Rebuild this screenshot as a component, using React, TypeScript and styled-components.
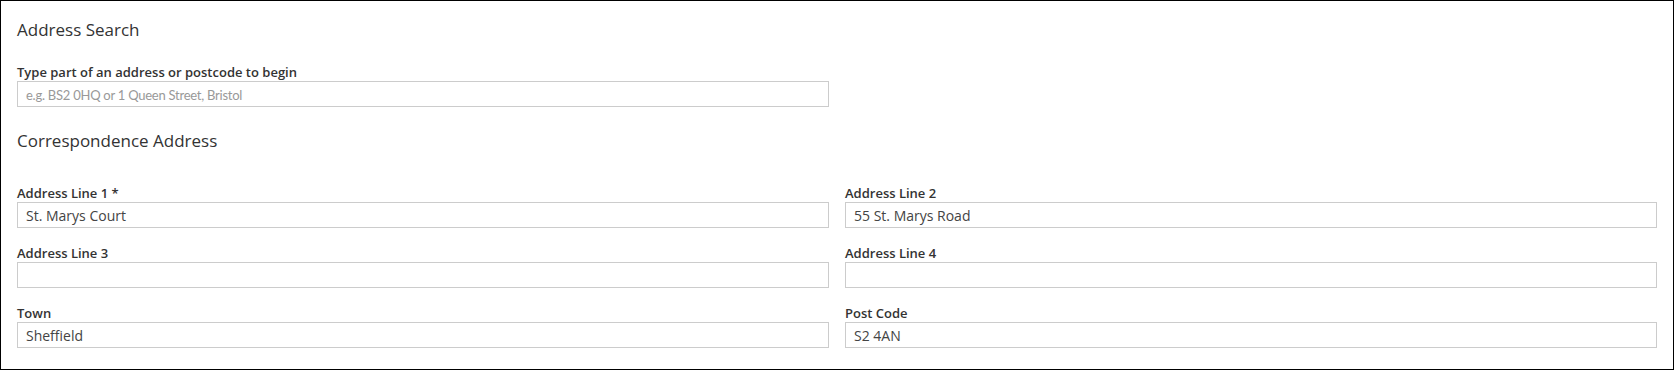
import styled, { createGlobalStyle } from "styled-components";

const GlobalStyle = createGlobalStyle`
  html, body {
    margin: 0;
    padding: 0;
    background: #fff;
  }
  * {
    box-sizing: border-box;
  }
`;

interface Field {
  id: string;
  label: string;
  value: string;
}

const fields: Field[] = [
  { id: "line1", label: "Address Line 1 *", value: "St. Marys Court" },
  { id: "line2", label: "Address Line 2", value: "55 St. Marys Road" },
  { id: "line3", label: "Address Line 3", value: "" },
  { id: "line4", label: "Address Line 4", value: "" },
  { id: "town", label: "Town", value: "Sheffield" },
  { id: "postcode", label: "Post Code", value: "S2 4AN" },
];

const App = () => {
  return (
    <>
      <GlobalStyle />
      <Panel>
        <Heading>Address Search</Heading>
        <SearchGroup>
          <Label htmlFor="search">Type part of an address or postcode to begin</Label>
          <Input id="search" placeholder="e.g. BS2 0HQ or 1 Queen Street, Bristol" readOnly />
        </SearchGroup>
        <Heading $spaced>Correspondence Address</Heading>
        <FieldGrid>
          {fields.map((field) => (
            <FieldGroup key={field.id}>
              <Label htmlFor={field.id}>{field.label}</Label>
              <Input id={field.id} defaultValue={field.value} />
            </FieldGroup>
          ))}
        </FieldGrid>
      </Panel>
    </>
  );
};

export default App;

const Panel = styled.div`
  width: 1674px;
  height: 370px;
  border: 1px solid #000;
  padding: 19px 16px 21px;
  font-family: "Open Sans", "Liberation Sans", sans-serif;
  color: #333;
  background: #fff;
`;

const Heading = styled.h2<{ $spaced?: boolean }>`
  margin: 0 0 ${(props) => (props.$spaced ? "33px" : "23px")};
  font-size: 17px;
  line-height: 20px;
  font-weight: 400;
  color: #333;
`;

const SearchGroup = styled.div`
  width: 812px;
  margin-bottom: 24px;
`;

const FieldGrid = styled.div`
  display: grid;
  grid-template-columns: 1fr 1fr;
  column-gap: 16px;
  row-gap: 16px;
`;

const FieldGroup = styled.div`
  display: flex;
  flex-direction: column;
`;

const Label = styled.label`
  display: block;
  margin-bottom: 0;
  font-size: 13px;
  line-height: 18px;
  font-weight: 600;
  color: #333;
`;

const Input = styled.input`
  display: block;
  width: 100%;
  height: 26px;
  margin: 0;
  padding: 0 8px;
  border: 1px solid #ccc;
  border-radius: 0;
  outline: none;
  background: #fff;
  font-family: "Open Sans", "Liberation Sans", sans-serif;
  font-size: 14px;
  color: #444;

  &::placeholder {
    font-family: Lato, "Open Sans", sans-serif;
    font-size: 13px;
    letter-spacing: -0.25px;
    color: #999;
  }
`;
